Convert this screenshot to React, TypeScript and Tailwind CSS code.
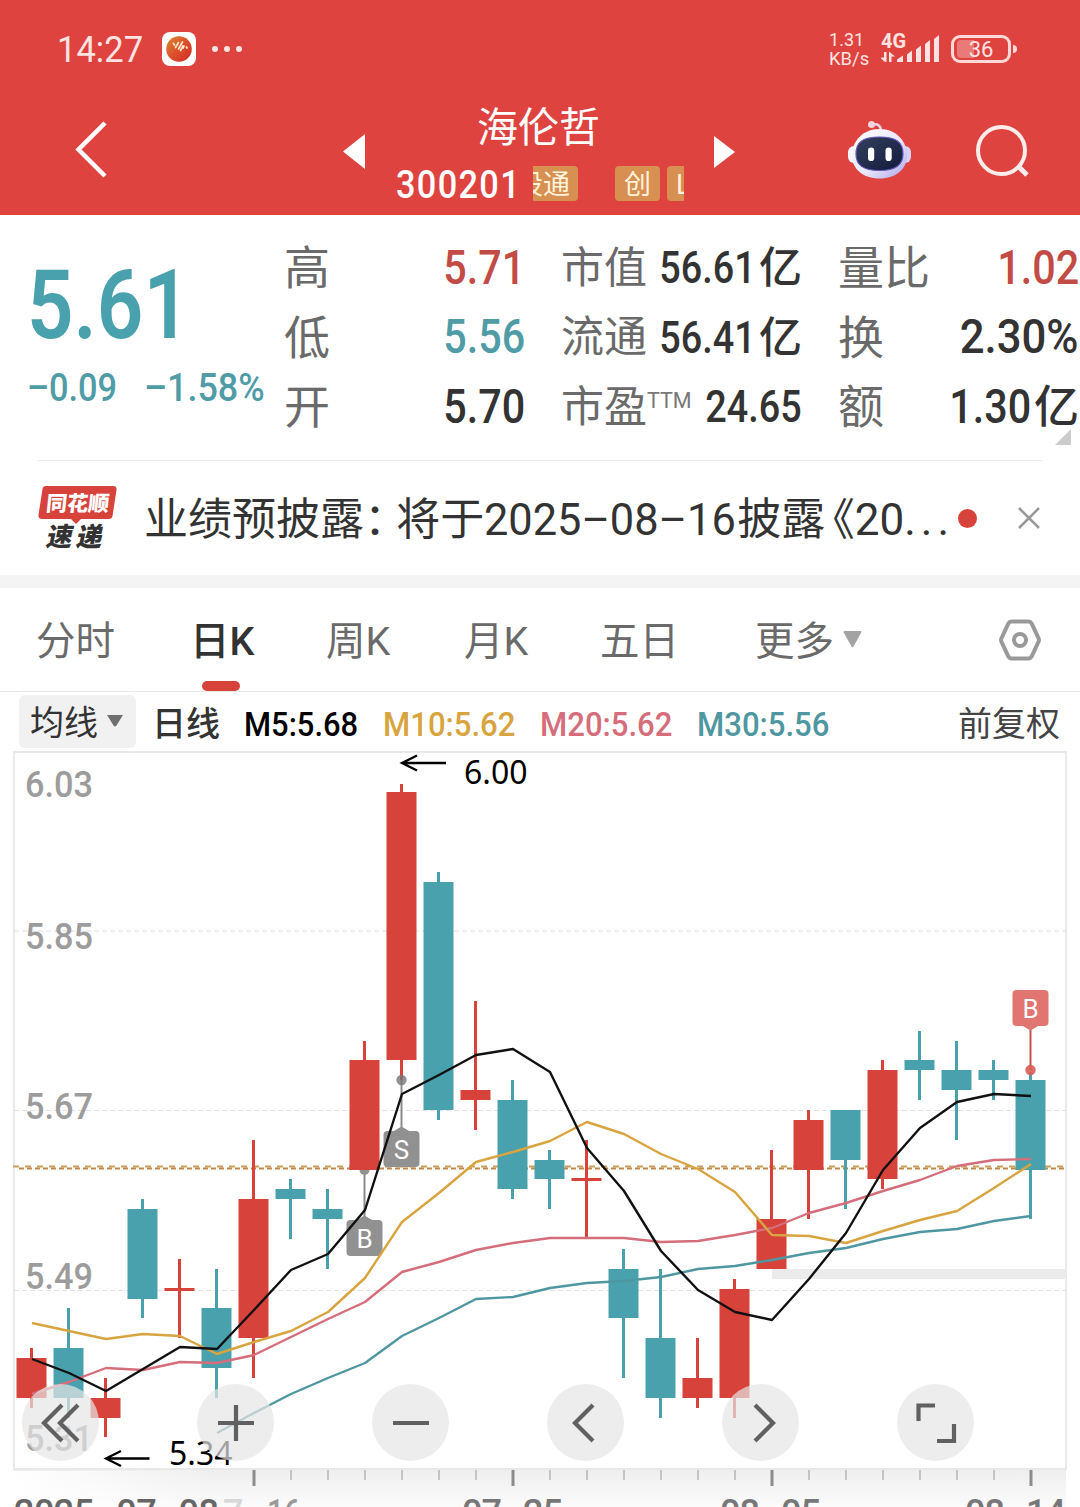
import clsx from 'clsx';

type Candle = [high: number, top: number, bottom: number, low: number, up: 0 | 1];

const RED = '#d7423b';
const TEAL = '#4aa1ae';

const FIRST_X = 31.5;
const STEP = 37;
const xAt = (i: number) => FIRST_X + i * STEP;

const candles: Candle[] = [
  [1348, 1358, 1398, 1408, 1],
  [1308, 1348, 1398, 1418, 0],
  [1378, 1398, 1418, 1437, 1],
  [1199, 1209, 1299, 1318, 0],
  [1259, 1288, 1291, 1338, 1],
  [1269, 1308, 1368, 1398, 0],
  [1140, 1199, 1338, 1378, 1],
  [1179, 1189, 1199, 1239, 0],
  [1189, 1209, 1219, 1269, 0],
  [1041, 1060, 1170, 1170, 1],
  [784, 792, 1060, 1080, 1],
  [872, 882, 1110, 1120, 0],
  [1001, 1090, 1100, 1130, 1],
  [1080, 1100, 1189, 1199, 0],
  [1150, 1160, 1179, 1209, 0],
  [1140, 1178, 1181, 1237, 1],
  [1249, 1269, 1318, 1378, 0],
  [1269, 1338, 1398, 1418, 0],
  [1338, 1378, 1398, 1408, 1],
  [1279, 1289, 1398, 1418, 1],
  [1150, 1219, 1269, 1269, 1],
  [1110, 1120, 1170, 1219, 1],
  [1110, 1110, 1160, 1209, 0],
  [1060, 1070, 1179, 1189, 1],
  [1031, 1060, 1070, 1100, 0],
  [1041, 1070, 1090, 1140, 0],
  [1060, 1070, 1080, 1100, 0],
  [1072, 1080, 1170, 1219, 0],
];

const averages = [
  {
    color: '#4f97a0',
    start: 5,
    ys: [1433, 1413, 1394, 1378, 1363, 1336, 1318, 1299, 1297, 1288, 1283, 1281, 1277, 1269, 1266, 1260, 1253, 1248, 1239, 1232, 1229, 1221, 1216],
  },
  {
    color: '#d56d7b',
    start: 0,
    ys: [1394, 1382, 1368, 1370, 1362, 1363, 1355, 1337, 1319, 1302, 1272, 1262, 1250, 1243, 1238, 1238, 1238, 1242, 1241, 1235, 1228, 1213, 1203, 1191, 1180, 1166, 1160, 1159],
  },
  {
    color: '#d7a43f',
    start: 0,
    ys: [1323, 1331, 1339, 1334, 1336, 1354, 1342, 1331, 1312, 1278, 1222, 1193, 1162, 1152, 1141, 1122, 1134, 1154, 1169, 1192, 1235, 1236, 1243, 1231, 1220, 1211, 1188, 1164],
  },
  {
    color: '#111111',
    start: 0,
    ys: [1359, 1373, 1391, 1369, 1347, 1349, 1310, 1270, 1254, 1210, 1094, 1075, 1055, 1049, 1072, 1148, 1191, 1251, 1290, 1312, 1320, 1279, 1233, 1170, 1128, 1102, 1094, 1096],
  },
];

const priceLabels = [
  { text: '6.03', y: 797 },
  { text: '5.85', y: 949 },
  { text: '5.67', y: 1119 },
  { text: '5.49', y: 1289 },
  { text: '5.31', y: 1451 },
];

const stats = [
  [
    { label: '高', value: '5.71', tone: 'text-[#c24b45]' },
    { label: '低', value: '5.56', tone: 'text-[#4f9ca7]' },
    { label: '开', value: '5.70', tone: 'text-[#333]' },
  ],
  [
    { label: '市值', value: '56.61', unit: '亿', tone: 'text-[#333]' },
    { label: '流通', value: '56.41', unit: '亿', tone: 'text-[#333]' },
    { label: '市盈', sup: 'TTM', value: '24.65', tone: 'text-[#333]' },
  ],
  [
    { label: '量比', value: '1.02', tone: 'text-[#c24b45]' },
    { label: '换', value: '2.30%', tone: 'text-[#333]' },
    { label: '额', value: '1.30', unit: '亿', tone: 'text-[#333]' },
  ],
];

function StatusBar() {
  return (
    <div className="flex h-[98px] items-center pl-[57px] pr-[63px] text-[#ffe3e2]">
      <div className="w-[105px] pt-[2px] text-[36px] leading-none whitespace-nowrap">
        <span className="inline-block origin-left scale-x-[.96]">14:27</span>
      </div>
      <svg className="h-[34px] w-[34px]" viewBox="0 0 34 34">
        <defs>
          <linearGradient id="ball" x1="0" y1="0" x2="1" y2="1">
            <stop offset="0" stopColor="#d98a35" />
            <stop offset=".5" stopColor="#dd4f2c" />
            <stop offset="1" stopColor="#cf2a26" />
          </linearGradient>
        </defs>
        <rect width="34" height="34" rx="8" fill="#fff" />
        <circle cx="17" cy="17" r="12.8" fill="url(#ball)" />
        <path d="M11.5 11.5l1 1.5M13.5 15.5l3-5M16.5 17l4-7M18.5 18.5l2.500-4.500M22 14l-.8 2M24.500 15l.5 1" stroke="#ffe9c8" strokeWidth="1.700" strokeLinecap="round" />
      </svg>
      <div className="ml-4 flex gap-[6px]">
        <i className="h-[6px] w-[6px] rounded-full bg-current" />
        <i className="h-[6px] w-[6px] rounded-full bg-current" />
        <i className="h-[6px] w-[6px] rounded-full bg-current" />
      </div>
      <div className="ml-auto w-[52px] text-[19px] leading-[19px]">
        <div className="origin-left scale-x-[.95]">1.31</div>
        <div className="origin-left scale-x-[.97] whitespace-nowrap">KB/s</div>
      </div>
      <div className="relative h-[34px] w-[70px]">
        <span className="absolute top-0 left-0 text-[20px] leading-[18px] font-bold">4G</span>
        <svg className="h-[34px] w-[60px]" viewBox="0 0 60 34" fill="currentColor">
          <path d="M3 20h2.500v10H4l-5-4.500h4zM8 30V19.500l6 5h-3.500V30z" />
          <path d="M16 30v-2.500l6-4V30zM26 30v-7.500l5-4V30zM35 30V17.500l5-4V30zM44 30V12l5-4v22zM53 30V7l5-4v27z" />
        </svg>
      </div>
      <div className="relative h-7 w-[60px] rounded-[9px] border-[3px] border-[#ffd9d8]">
        <div className="absolute top-[2px] left-[3px] h-[18px] w-[17px] rounded-l-[4px] bg-[#ea7a77]" />
        <div className="relative text-center text-[22px] leading-[23px]">36</div>
      </div>
      <i className="ml-[2px] h-[8px] w-[4px] rounded-r bg-[#ffd9d8]" />
    </div>
  );
}

function RobotIcon() {
  return (
    <svg className="h-[62px] w-[66px]" viewBox="0 0 66 62">
      <defs>
        <linearGradient id="shell" x1="0" y1="0" x2="1" y2="1">
          <stop offset="0" stopColor="#fff" />
          <stop offset=".55" stopColor="#ece8fb" />
          <stop offset="1" stopColor="#a9a4ea" />
        </linearGradient>
        <linearGradient id="visor" x1="0" y1="0" x2="1" y2="1">
          <stop offset="0" stopColor="#34405e" />
          <stop offset="1" stopColor="#131a3c" />
        </linearGradient>
      </defs>
      <path d="M26 5c6-2 9 1 9 6" fill="none" stroke="#e8d8ea" strokeWidth="2.500" />
      <circle cx="25.500" cy="4.500" r="3.500" fill="#f3d5de" />
      <rect x="2" y="26" width="12" height="17" rx="6" fill="#fdf3f8" />
      <rect x="53" y="26" width="12" height="17" rx="6" fill="#d8d2f4" />
      <path d="M33.500 9C51 9 61 22 61 35.500S50 58.500 33.500 58.500 6 49 6 35.500 16 9 33.500 9z" fill="url(#shell)" />
      <path d="M33.500 17C50 17 57 22 57 34c0 11-7 16.500-23.500 16.500S10 45 10 34c0-12 7-17 23.500-17z" fill="url(#visor)" stroke="#6158b8" strokeWidth="1.200" />
      <rect x="22" y="27.500" width="6.200" height="13.500" rx="3.100" fill="#fff" />
      <rect x="39.500" y="27.500" width="6.200" height="13.500" rx="3.100" fill="#fff" />
    </svg>
  );
}

function TitleBar() {
  return (
    <div className="flex h-[117px] items-start text-white">
      <svg className="mt-[20px] ml-[72px] h-[64px] w-[40px]" viewBox="0 0 40 64" fill="none" stroke="currentColor" strokeWidth="4.500">
        <path d="M33 5L6.500 31.500 33 58" />
      </svg>
      <svg className="mt-9 ml-[231px] h-[35px] w-[22px]" viewBox="0 0 22 35" fill="currentColor">
        <path d="M22 0v35L0 17.500z" />
      </svg>
      <div className="ml-[31px] w-[289px]">
        <div className="mt-[5px] pl-[81px] text-[41px] leading-[50px] font-normal whitespace-nowrap">海伦哲</div>
        <div className="mt-[13px] flex h-[35px] items-center">
          <div className="w-[137px] pt-[3px] text-[39px] leading-none font-medium tracking-[1.500px]">
            <span className="inline-block origin-left scale-x-[.88]">300201</span>
          </div>
          <div className="flex h-[35px] w-[151px] overflow-hidden text-[27px] leading-[38px] text-[#fff3dc]">
            <div className="flex w-[45px] shrink-0 justify-end rounded-r-[4px] bg-[#d88f52] pr-[8px] whitespace-nowrap">股通</div>
            <div className="ml-[37px] w-[45px] shrink-0 rounded-[4px] bg-[#d88f52] text-center">创</div>
            <div className="ml-[7px] w-[45px] shrink-0 rounded-[4px] bg-[#d88f52] pl-[9px]">L</div>
          </div>
        </div>
      </div>
      <svg className="mt-[38px] ml-[29px] h-[32px] w-[21px]" viewBox="0 0 21 32" fill="currentColor">
        <path d="M0 0v32l21-16z" />
      </svg>
      <div className="mt-[22px] ml-[111px]">
        <RobotIcon />
      </div>
      <svg className="mt-[25px] ml-[62px] h-[58px] w-[58px]" viewBox="0 0 58 58" fill="none" stroke="#ffeceb" strokeWidth="4">
        <circle cx="27.500" cy="27.500" r="23.500" />
        <path d="M44 43l9 9" strokeWidth="5" />
      </svg>
    </div>
  );
}

function Quote() {
  return (
    <section className="relative flex h-[245px]">
      <div className="w-[285px] shrink-0 font-medium whitespace-nowrap text-[#4aa1ae]">
        <div className="mt-[42px] ml-[27px] h-[96px] w-[170px] text-[96px] leading-[96px] font-semibold">
          <span className="inline-block origin-left scale-x-[.85]">5.61</span>
        </div>
        <div className="mt-[15px] flex h-10 text-[39px] leading-10 text-[#4f9ca7]">
          <div className="ml-[27px] w-[117px]">
            <span className="inline-block origin-left scale-x-[.88]">–0.09</span>
          </div>
          <span className="inline-block origin-left scale-x-[.92]">–1.58%</span>
        </div>
      </div>
      <div className="flex shrink-0 gap-[37px] pt-[18px]">
        {stats.map((column, c) => (
          <div key={c} className="w-[240px]">
            {column.map((row) => (
              <div key={row.label} className="flex h-[69.500px] items-center leading-none whitespace-nowrap">
                <span className={clsx('-ml-px pt-px text-[#6a6a6a]', c === 1 ? 'text-[43px]' : 'text-[46px]')}>{row.label}</span>
                {'sup' in row && <span className="mb-3 w-[43px] text-[21.500px] text-[#777]">{row.sup}</span>}
                <span className="flex-1" />
                <span
                  className={clsx(
                    'flex w-0 justify-end font-medium',
                    row.tone,
                    c === 1 ? 'text-[45px]' : 'text-[48px]',
                  )}
                >
                  <span
                    className={clsx(
                      'inline-block origin-right',
                      row.value.endsWith('%') ? 'scale-x-[.91]' : c === 1 ? 'scale-x-[.84]' : 'scale-x-[.86]',
                    )}
                  >
                    {row.value}
                  </span>
                </span>
                {'unit' in row && (
                  <span className={clsx('ml-[3px] pt-[2px] font-medium', row.tone, c === 1 ? 'text-[43px]' : 'text-[45px]')}>
                    {row.unit}
                  </span>
                )}
              </div>
            ))}
          </div>
        ))}
      </div>
      <svg className="absolute right-[9px] bottom-[15px] h-4 w-4" viewBox="0 0 16 16">
        <path d="M16 0v16H0z" fill="#ccc" />
      </svg>
    </section>
  );
}

function Notice() {
  return (
    <section className="mx-[38px] flex h-[115px] items-center border-t border-[#ebebeb]">
      <div className="relative h-[66px] w-[80px] shrink-0">
        <svg className="absolute inset-0 h-[66px] w-[80px]" viewBox="0 0 80 66">
          <path d="M8 1h67q4 0 3.500 4l-4 26q-.5 3-4 3H43l-5 5-5-5H4q-4 0-3.500-4l4-26Q5 1 8 1z" fill="#d7423b" />
        </svg>
        <div className="relative -skew-x-6 pt-[7px] text-center text-[21px] leading-[24px] font-black text-white">同花顺</div>
        <div className="relative -skew-x-12 pt-[8px] pr-1 text-center text-[26px] leading-[26px] font-black text-[#333]">
          速<span className="ml-1">递</span>
        </div>
      </div>
      <div className="ml-[26px] flex w-[810px] shrink-0 items-center pt-[3px] text-[44px] leading-none whitespace-nowrap text-[#333]">
        <span>业绩预披露</span>
        <span className="w-[35px] [font-feature-settings:'halt']">：</span>
        <span>将于</span>
        <span className="w-[253px]">
          <span className="inline-block origin-left scale-x-[.985]">2025–08–16</span>
        </span>
        <span>披露</span>
        <span className="flex w-[32px] justify-end [font-feature-settings:'halt']">《</span>
        <span>20</span>
        <span className="tracking-[5px]">...</span>
      </div>
      <i className="ml-[4px] h-[19px] w-[19px] shrink-0 rounded-full bg-[#d7423b]" />
      <svg className="ml-[41px] h-[22px] w-[22px] shrink-0" viewBox="0 0 22 22" stroke="#999" strokeWidth="2.500">
        <path d="M1 1l20 20M21 1L1 21" />
      </svg>
    </section>
  );
}

function Tabs() {
  return (
    <nav className="flex h-[104px] items-center border-b border-[#e8e8e8] pl-[36px] text-[39.500px] leading-none whitespace-nowrap text-[#6a6a6a]">
      <span className="w-[154px] pt-[5px]">分时</span>
      <span className="relative w-[136px] pt-[5px] font-medium text-[#333]">
        日K
        <i className="absolute top-[64px] left-[12px] h-[10px] w-[38px] rounded-full bg-[#d7423b]" />
      </span>
      <span className="w-[138px] pt-[5px]">周K</span>
      <span className="w-[136px] pt-[5px]">月K</span>
      <span className="w-[155px] pt-[5px]">五日</span>
      <span className="pt-[5px]">更多</span>
      <svg className="ml-[9px] h-[17px] w-[19px]" viewBox="0 0 19 17">
        <path d="M1.500 0h16q1.500 0 .8 1.500L10.500 15.500q-1 1.500-2 0L.7 1.500Q0 0 1.500 0z" fill="#a3a3a3" />
      </svg>
      <svg className="ml-[137px] h-[42px] w-[42px]" viewBox="0 0 42 42" fill="none" stroke="#999" strokeWidth="4">
        <path d="M12.500 2.500h17q2 0 3 1.700l7 15q.8 1.800 0 3.600l-7 15q-1 1.700-3 1.700h-17q-2 0-3-1.700l-7-15q-.8-1.800 0-3.600l7-15q1-1.700 3-1.700z" />
        <circle cx="21" cy="21" r="6" />
      </svg>
    </nav>
  );
}

function Legend() {
  return (
    <div className="flex h-[58px] items-center pl-[19px] text-[34px] leading-none whitespace-nowrap text-[#333]">
      <div className="flex h-[53px] w-[117px] items-center rounded-[6px] bg-[#f1f1f1] pl-[11px]">
        <span className="pt-[4px]">均线</span>
        <svg className="ml-[9px] h-3 w-4" viewBox="0 0 16 12">
          <path d="M0 0h16l-6.500 10.500q-1.500 2-3 0z" fill="#707070" />
        </svg>
      </div>
      <span className="ml-[16px] w-[92px] pt-[5px] font-medium">日线</span>
      <span className="w-[139px] pt-[6px] font-medium text-black">
        <span className="inline-block origin-left scale-x-[.91]">M5:5.68</span>
      </span>
      <span className="w-[157px] pt-[6px] font-medium text-[#d7a43f]">
        <span className="inline-block origin-left scale-x-[.915]">M10:5.62</span>
      </span>
      <span className="w-[157px] pt-[6px] font-medium text-[#d56d7b]">
        <span className="inline-block origin-left scale-x-[.915]">M20:5.62</span>
      </span>
      <span className="w-[157px] pt-[6px] font-medium text-[#4f97a0]">
        <span className="inline-block origin-left scale-x-[.915]">M30:5.56</span>
      </span>
      <span className="ml-auto pt-[5px] pr-[20px] text-[#444]">前复权</span>
    </div>
  );
}

function Marker({ x, y, letter, color }: { x: number; y: number; letter: string; color: string }) {
  return (
    <g>
      <rect x={x - 18} y={y} width="36" height="36" rx="4" fill={color} />
      <text x={x} y={y + 27.5} fontSize="26" fill="#fff" textAnchor="middle">
        {letter}
      </text>
    </g>
  );
}

function Chart() {
  return (
    <svg className="block h-[757px] w-[1080px]" viewBox="0 750 1080 757">
      <defs>
        <linearGradient id="axis" x1="0" y1="0" x2="0" y2="1">
          <stop offset="0" stopColor="#eeeeee" />
          <stop offset="1" stopColor="#fbfbfb" />
        </linearGradient>
        <linearGradient id="axisFade" x1="0" y1="0" x2="1" y2="0">
          <stop offset="0" stopColor="#fff" />
          <stop offset="1" stopColor="#fff" stopOpacity="0" />
        </linearGradient>
      </defs>

      {/* grid */}
      <rect x="14" y="1469" width="1052" height="38" fill="url(#axis)" />
      <rect x="14" y="1471" width="200" height="36" fill="url(#axisFade)" />
      <rect x="14" y="752" width="1052" height="717" fill="none" stroke="#e9e9e9" strokeWidth="2" />
      {[931, 1110.5, 1290.5].map((y) => (
        <line key={y} x1="14" x2="1066" y1={y} y2={y} stroke="#e0e0e0" strokeWidth="1.200" strokeDasharray="5 3" />
      ))}
      <rect x="772" y="1269" width="294" height="10" fill="#ebebeb" />
      <line x1="13" x2="1066" y1="1166.500" y2="1166.500" stroke="#c9a05c" strokeWidth="1.800" strokeDasharray="6 6" />
      <line x1="19" x2="1066" y1="1168.500" y2="1168.500" stroke="#c08a48" strokeWidth="1.800" strokeDasharray="5 3" />
      {priceLabels.map((l) => (
        <text key={l.text} x="25" y={l.y} fontSize="36" fontWeight="500" fill="#9c9c9c" textLength="68" lengthAdjust="spacingAndGlyphs">
          {l.text}
        </text>
      ))}

      {/* trade markers */}
      <g stroke="#8a8a8a" strokeWidth="2">
        <line x1="364.500" x2="364.500" y1="1170" y2="1218" />
        <line x1="401.500" x2="401.500" y1="1080" y2="1130" />
      </g>
      <circle cx="364.500" cy="1170" r="5" fill="#919191" />
      <path d="M356 1220.500l8.500-5 8.500 5zM393 1131.500l8.500-5 8.500 5z" fill="#919191" />
      <Marker x={364.5} y={1220} letter="B" color="#919191" />
      <Marker x={401.5} y={1131} letter="S" color="#919191" />

      {/* candles */}
      {candles.map(([high, top, bottom, low, up], i) => {
        const x = xAt(i);
        return (
          <g key={i} fill={up ? RED : TEAL}>
            <rect x={x - 1.5} y={high} width="3" height={low - high} />
            <rect x={x - 15} y={top} width="30" height={bottom - top} />
          </g>
        );
      })}
      <circle cx="401.500" cy="1080" r="5.200" fill="#777" fillOpacity=".8" />
      <line x1="1030.500" x2="1030.500" y1="1028" y2="1070" stroke="#c9504c" strokeWidth="2" />
      <circle cx="1030.500" cy="1070" r="5.200" fill="#d95c58" fillOpacity=".9" />
      <path d="M1022 1025.500l8.500 5 8.500-5z" fill="#e07571" />
      <Marker x={1030.5} y={990} letter="B" color="#e07571" />

      {averages.map((line) => (
        <polyline
          key={line.color}
          points={line.ys.map((y, i) => `${xAt(i + line.start) + 0.5},${y}`).join(' ')}
          fill="none"
          stroke={line.color}
          strokeWidth="2.400"
          strokeLinejoin="round"
        />
      ))}

      {/* high / low annotations */}
      <g fill="none" stroke="#000" strokeWidth="2.300">
        <path d="M446 763H402M417 755.500L402 763l15 7.500" />
        <path d="M149.500 1458.500H106M121 1451l-15 7.500 15 7.500" />
      </g>
      <g className="font-['Noto_Sans',sans-serif]" fontSize="32">
        <text x="464" y="784">6.00</text>
        <text x="169" y="1465">5.34</text>
      </g>

      {/* time axis */}
      {Array.from({ length: 22 }, (_, i) => {
        const major = i % 7 === 0;
        const x = xAt(i + 6) + 0.5;
        return (
          <line key={i} x1={x} x2={x} y1="1470" y2={major ? 1486 : 1480} stroke={major ? '#8c8c8c' : '#c4c4c4'} strokeWidth={major ? 3 : 2} />
        );
      })}
      <g fontSize="36" fill="#777" fontWeight="500">
        <text x="223" y="1525" fill="#d8d8d8">7</text>
        <text x="267" y="1525" fill="#999" textLength="34" lengthAdjust="spacingAndGlyphs">16</text>
        <text x="14" y="1525" fill="#666" textLength="205">2025–07–08</text>
        <text x="462" y="1525" textLength="101">07–25</text>
        <text x="720" y="1525" textLength="101">08–05</text>
        <text x="965" y="1525" textLength="101">08–14</text>
      </g>
    </svg>
  );
}

const controls = [
  'M20 1L2 19l18 18M36 1L18 19l18 18',
  'M1 19h36M19 1v36',
  'M1 19h36',
  'M26 1L8 19l18 18',
  'M13 1l18 18-18 18',
  'M1.500 17V1.500H18M37 20v17H20',
];

function ChartControls() {
  return (
    <div className="absolute bottom-[46px] left-[22px] flex gap-[98px]">
      {controls.map((d) => (
        <button key={d} className="flex h-[77px] w-[77px] items-center justify-center rounded-full bg-[#e5e5e5]/70">
          <svg className="h-[38px] w-[38px] overflow-visible" viewBox="0 0 38 38" fill="none" stroke="#606060" strokeWidth="4.200">
            <path d={d} />
          </svg>
        </button>
      ))}
    </div>
  );
}

export default function App() {
  return (
    <main className="h-[1507px] w-[1080px] overflow-hidden bg-white font-[Roboto,'Noto_Sans_CJK_SC',sans-serif]">
      <header className="h-[215px] bg-[#de433f]">
        <StatusBar />
        <TitleBar />
      </header>
      <Quote />
      <Notice />
      <div className="h-[13px] bg-[#f4f4f4]" />
      <Tabs />
      <Legend />
      <div className="relative">
        <Chart />
        <ChartControls />
      </div>
    </main>
  );
}
